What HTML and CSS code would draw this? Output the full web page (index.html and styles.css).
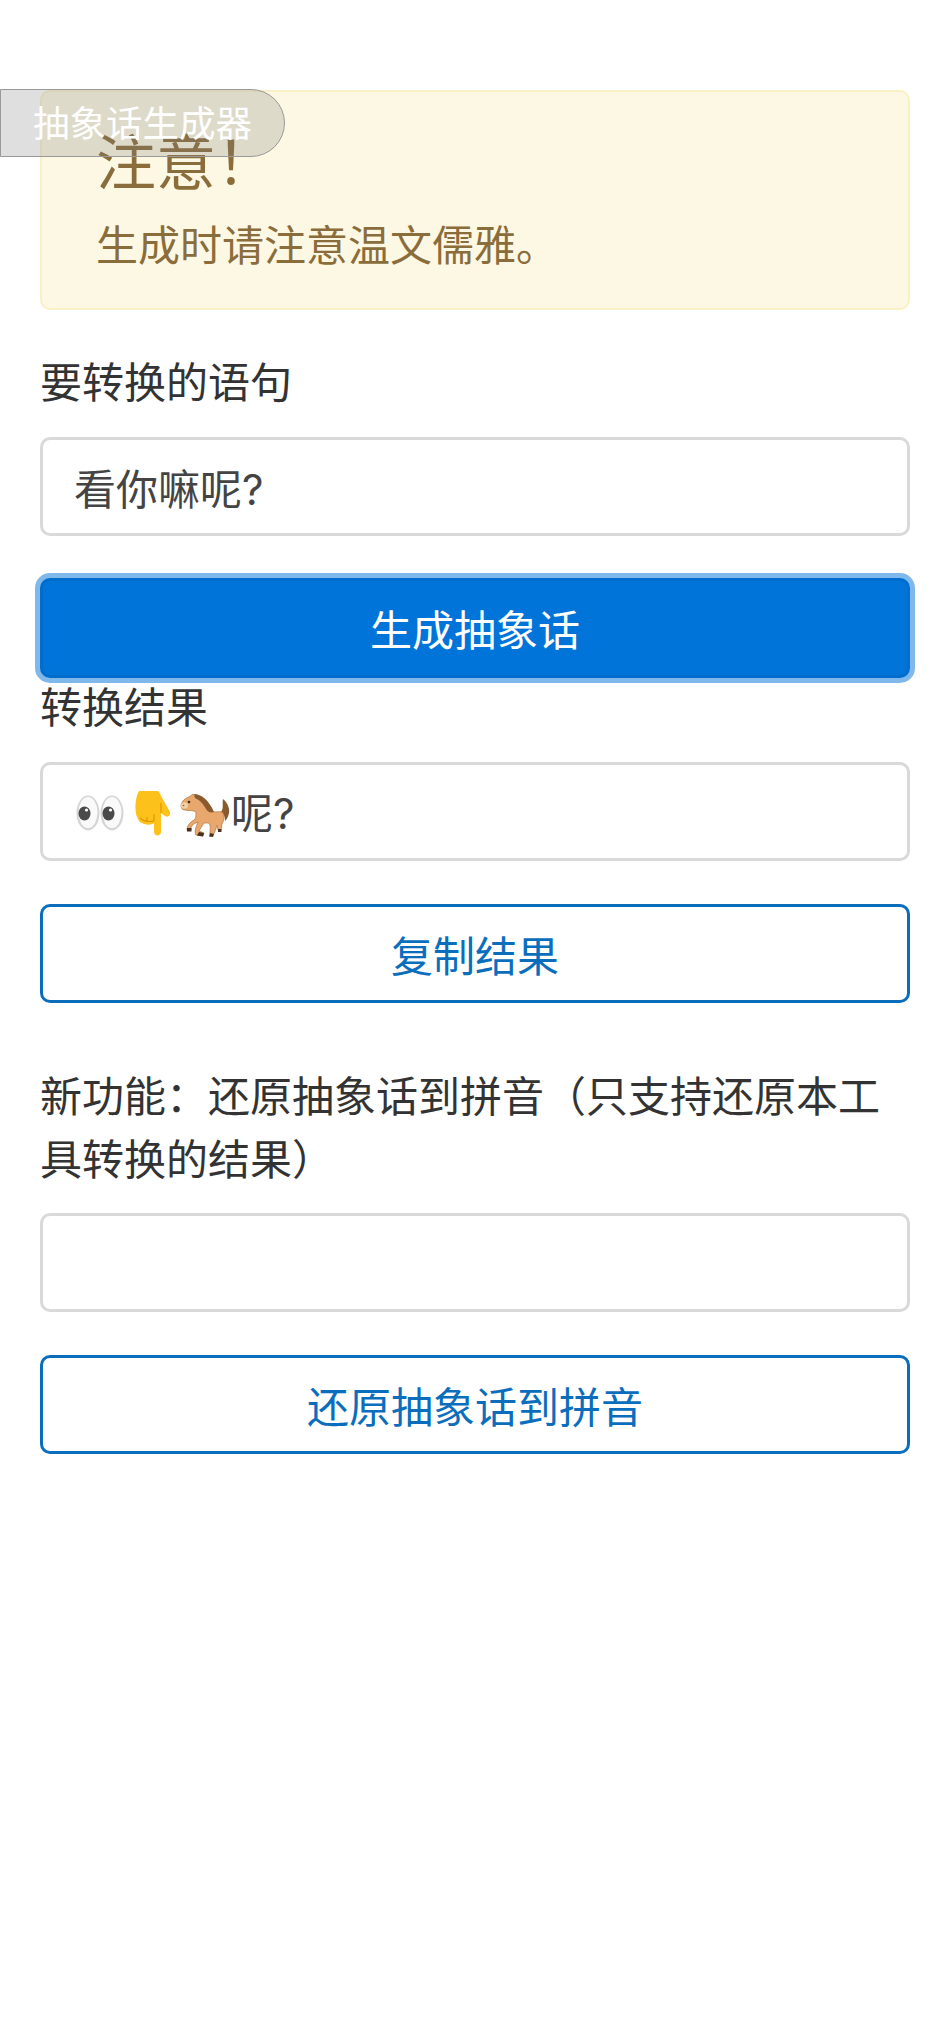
FILE: index.html

```html
<!DOCTYPE html>
<html lang="zh-CN">
<head>
  <meta charset="UTF-8" />
  <meta name="viewport" content="width=device-width, initial-scale=1.0"/>
  <title>抽象话生成器</title>
  <link rel="stylesheet" href="styles.css">
</head>
<body>
  <div class="page-tag">抽象话生成器</div>
  <div class="container">
    <div class="alert">
      <h4 class="alert-title">注意！</h4>
      <p class="alert-text">生成时请注意温文儒雅。</p>
    </div>

    <label class="label" for="source">要转换的语句</label>
    <input class="field" type="text" id="source" value="看你嘛呢?" />
    <button class="btn btn-primary" type="button">生成抽象话</button>

    <div class="label">转换结果</div>
    <div class="field field-result">
      <svg class="emoji" viewBox="0 0 52 52" aria-label="eyes">
        <ellipse cx="13" cy="25" rx="11.5" ry="17.5" fill="#d5d5d5"/>
        <ellipse cx="13" cy="24.5" rx="9.5" ry="15.5" fill="#fafafa"/>
        <ellipse cx="37" cy="25" rx="11.5" ry="17.5" fill="#d5d5d5"/>
        <ellipse cx="37" cy="24.5" rx="9.5" ry="15.5" fill="#fafafa"/>
        <ellipse cx="9.5" cy="25.5" rx="6" ry="7" fill="#4a4a4a"/>
        <ellipse cx="33.5" cy="25.5" rx="6" ry="7" fill="#4a4a4a"/>
        <circle cx="11.5" cy="22" r="1.6" fill="#fff"/>
        <circle cx="35.5" cy="22" r="1.6" fill="#fff"/>
      </svg><svg class="emoji" viewBox="0 0 52 52" aria-label="pointing down">
        <path d="M12 3H30C32 3 33 5 34 8L42.500 23C44.500 27 41 30 38 28L34 25V44C34 48.500 27 48.500 27 44V35C24 38 13 37 11 31C7 25 8 9 12 3Z" fill="#fcc21b"/>
        <path d="M34 25V15M13 30C16 33 22 34 27 33M27 33V26M20 33V29" fill="none" stroke="#e59600" stroke-width="1.200"/>
      </svg><svg class="emoji" viewBox="0 0 52 52" aria-label="horse">
        <path d="M42 24C45 20 43 15 44 11C48 14 51 20 50 25C49 29 48 31 46 33C46 29 45 26 42 24Z" fill="#8a5a2e"/>
        <path d="M2 17C3 13 6 10 10 9L14 6L16 9C22 10 28 18 32 23C36 25 40 23 43 24C46 27 45 33 43 36L42 42L39 42L38 37C37 41 36 44 34 47L31 46C31 41 32 38 30 35C28 35 26 35 25 35C23 38 21 41 20 43L25 45L24 48L17 47C15 45 17 38 19 34C16 35 13 37 12 39L12 42L8 42C8 38 11 34 15 32C17 31 17 28 17 24C15 22 10 23 6 22C3 22 2 20 2 17Z" fill="#e8a76c" stroke="#b97f48" stroke-width="0.800"/>
        <path d="M15 6C22 6 30 12 35 24C31 25 29 24 27 21C25 17 21 12 16 10Z" fill="#8a5a2e"/>
        <ellipse cx="5.500" cy="17.500" rx="3.500" ry="3.200" fill="#f3cfa3"/>
        <circle cx="10" cy="14" r="1.300" fill="#3e2a18"/>
        <circle cx="4.500" cy="17.500" r="0.800" fill="#8a5a2e"/>
        <path d="M8 40H12.500V43.500H8ZM20 44L25 45L24 48.500L18 47.500ZM31 45L35 46L34 49L30 48.500ZM39 41H42.500V44H39Z" fill="#4a3020"/>
      </svg><span>呢?</span>
    </div>
    <button class="btn btn-outline" type="button">复制结果</button>

    <label class="label label-new" for="restore">新功能：还原抽象话到拼音（只支持还原本工具转换的结果）</label>
    <input class="field" type="text" id="restore" />
    <button class="btn btn-outline" type="button">还原抽象话到拼音</button>
  </div>
</body>
</html>
```

FILE: styles.css

```css
* {
  box-sizing: border-box;
}
body {
  margin: 0;
  position: relative;
  min-height: 2020px;
  background: #fff;
  color: #333;
  font-family: Inter, "Noto Sans CJK SC", "Noto Sans", sans-serif;
  font-size: 42px;
  line-height: 63px;
}
.container {
  padding: 90px 36px 0 40px;
}
.page-tag {
  position: absolute;
  top: 89px;
  left: 0;
  width: 285px;
  height: 68px;
  padding: 3px 0 0 32px;
  background: rgba(128, 128, 128, 0.25);
  border: 1px solid #999;
  border-radius: 0 34px 34px 0;
  color: #fff;
  font-size: 36.5px;
  line-height: 63px;
}
.alert {
  height: 220px;
  padding: 31px 54px 0;
  background: #fdf8e3;
  border: 2px solid #faf0c8;
  border-radius: 10px;
  color: #8a6d3b;
}
.alert-title {
  margin: 0;
  font-size: 60px;
  font-weight: 400;
  line-height: 80px;
}
.alert-text {
  margin: 11px 0 0;
}
.label {
  display: block;
  margin: 41px 0 23px;
}
.btn + .label {
  margin: -2px 0 23px;
}
.btn + .label-new {
  margin: 62px 0 22px;
}
.field {
  display: block;
  width: 100%;
  height: 99px;
  padding: 0 31px;
  background: #fff;
  border: 3px solid #d9d9d9;
  border-radius: 10px;
  color: #444;
  font: inherit;
  outline: none;
}
.field-result {
  display: flex;
  align-items: center;
  padding: 4px 31px 0 32px;
}
.emoji {
  flex: none;
  width: 52px;
  height: 52px;
}
.btn {
  display: block;
  width: 100%;
  height: 99px;
  margin: 43px 0 0;
  padding: 5px 0 0;
  background: #fff;
  border: 3px solid #0a6ebd;
  border-radius: 10px;
  color: #0a6ebd;
  font: inherit;
}
.btn-primary {
  height: 100px;
  margin-top: 42px;
  background: #0074d9;
  border-color: #006dcc;
  color: #fff;
  box-shadow: 0 0 0 5px rgba(0, 116, 217, 0.5);
}
```
